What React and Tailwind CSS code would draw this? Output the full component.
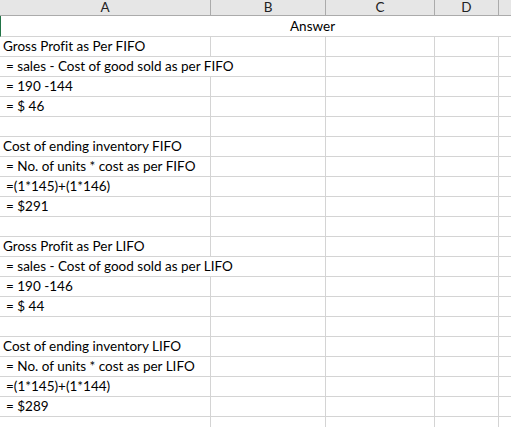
const rows = [
  { text: 'Gross Profit as Per FIFO', title: true },
  { text: '= sales - Cost of good sold as per FIFO', spill: true },
  { text: '= 190 -144' },
  { text: '= $ 46' },
  { text: '' },
  { text: 'Cost of ending inventory FIFO', title: true },
  { text: '= No. of units * cost as per FIFO' },
  { text: '=(1*145)+(1*146)' },
  { text: '= $291' },
  { text: '' },
  { text: 'Gross Profit as Per LIFO', title: true },
  { text: '= sales - Cost of good sold as per LIFO', spill: true },
  { text: '= 190 -146' },
  { text: '= $ 44' },
  { text: '' },
  { text: 'Cost of ending inventory LIFO', title: true },
  { text: '= No. of units * cost as per LIFO' },
  { text: '=(1*145)+(1*144)' },
  { text: '= $289' },
  { text: '' },
  { text: '' },
]

function HeaderCell({ label, className }) {
  return (
    <div className={`flex shrink-0 items-center justify-center border-r border-[#ababab] ${className}`}>
      {label}
    </div>
  )
}

function Row({ text, title, spill }) {
  return (
    <div className="flex h-[20px] shrink-0 border-b border-[#d4d4d4]">
      <div
        className={`flex w-[211px] shrink-0 items-end whitespace-nowrap pb-[1px] leading-[18px] ${spill ? '' : 'border-r border-[#d4d4d4]'} ${title ? 'pl-[3px]' : 'pl-[6px]'}`}
      >
        {text}
      </div>
      <div className="w-[115px] shrink-0 border-r border-[#d4d4d4]" />
      <div className="w-[109px] shrink-0 border-r border-[#d4d4d4]" />
      <div className="w-[64px] shrink-0 border-r border-[#d4d4d4]" />
      <div className="flex-1" />
    </div>
  )
}

export default function App() {
  return (
    <div className="flex h-[427px] w-[511px] flex-col overflow-hidden bg-white font-['Lato',sans-serif] text-[13.5px] text-black [font-variant-ligatures:none]">
      <div className="flex h-[16px] shrink-0 border-b border-[#ababab] bg-[#e6e6e6] text-[13.5px] leading-none text-[#222]">
        <HeaderCell label="A" className="w-[211px]" />
        <HeaderCell label="B" className="w-[115px]" />
        <HeaderCell label="C" className="w-[109px]" />
        <HeaderCell label="D" className="w-[64px]" />
        <div className="flex-1" />
      </div>

      <div className="flex h-[21px] shrink-0 items-end border-b border-l border-[#d4d4d4] border-l-[#217346] pb-[1px] pl-[289px] leading-[18px]">
        Answer
      </div>

      {rows.map((row, i) => (
        <Row key={i} {...row} />
      ))}
    </div>
  )
}
